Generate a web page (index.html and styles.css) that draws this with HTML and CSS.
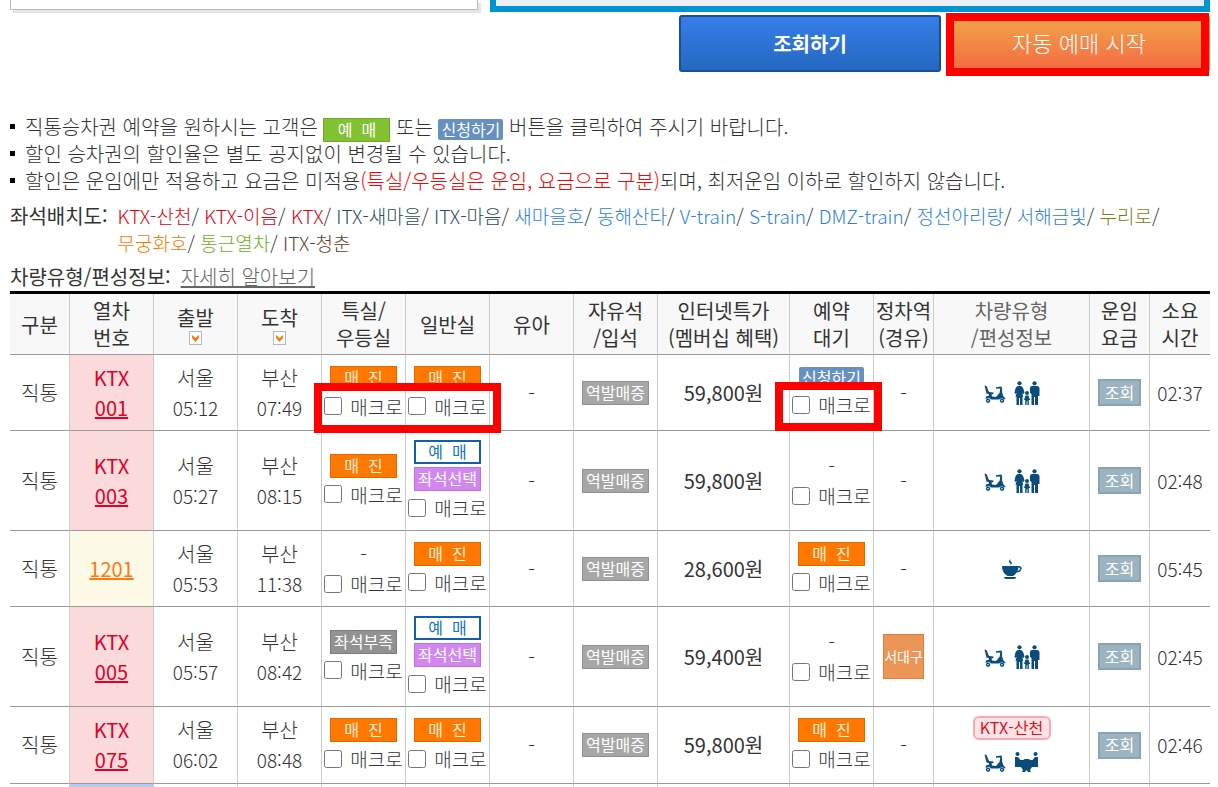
FILE: index.html
```html
<!DOCTYPE html>
<html lang="ko">
<head>
    <meta charset="utf-8">
    <title>승차권 예매</title>
    <link rel="stylesheet" href="styles.css">
</head>
<body>
    <svg class="defs" aria-hidden="true">
        <symbol id="scooter" viewBox="0 0 22 24">
            <path d="M0.500 4.500 L2.500 5 L5 11 L9.500 11.500 L9.500 13 L7.500 13.500 L8 15.500 L12 16 L15.500 12 L16.300 7.500 L12 7.800 L12 6.300 L17 5.500 L18 6.500 L18.200 12 L19.500 15.500 L21.500 17.500 L21 18.500 L18 17 L15 18.500 L7 18.500 L5 16.800 L1.500 18 L2 15.500 L5 14.500 L5 13.300 L2.500 12.500 Z"/>
            <path d="M4 17.500 a2.200 2.200 0 1 0 0.100 0 Z M4 19 a0.700 0.700 0 1 1 -0.100 0 Z" fill-rule="evenodd"/>
            <path d="M18 17.500 a2.200 2.200 0 1 0 0.100 0 Z M18 19 a0.700 0.700 0 1 1 -0.100 0 Z" fill-rule="evenodd"/>
        </symbol>
        <symbol id="family" viewBox="0 0 26 24">
            <circle cx="5.500" cy="2.300" r="2.100"/>
            <circle cx="20.500" cy="2.300" r="2.100"/>
            <circle cx="13" cy="12" r="2"/>
            <path d="M4 5 H7 Q9.500 6 10.500 12 L9.500 13 L8.500 12 L9 16 H8.500 V24 H6 V17 H5 V24 H2.500 V16 H1.500 L2.500 12 L1.500 13 L0.500 12 Q1 6 4 5 Z"/>
            <path d="M18 5 H23 Q25.500 5 25.500 8 V15 H24 V24 H21 V16 H20 V24 H17.500 V13 L16 12 V7 Q16 5 18 5 Z"/>
            <path d="M11.500 14.500 H14.500 L16 19 H14.800 V24 H13.400 V20 H12.600 V24 H11.200 V19 H10 Z"/>
        </symbol>
        <symbol id="meeting" viewBox="0 0 26 24">
            <circle cx="3.500" cy="4" r="2"/>
            <circle cx="21.500" cy="4" r="2"/>
            <path d="M1 7 H4 L6.500 10 H9 L11 9 H14.500 L16.500 10 H18.500 L21 7 H24 V17 H18 L16 20 L17 22 H14 L13 20.500 H12 L11 22 H8 L9 20 L7 17 H1 Z"/>
        </symbol>
        <symbol id="cup" viewBox="0 0 20 22">
            <path d="M8.500 1 Q5.500 3.500 8 5 Q8.500 6.500 8.500 7 Q11 5 9 3.800 Q7.800 3 8.500 1 Z"/>
            <path d="M0 8 H16.500 Q20 8 19.500 11 Q18.500 14.500 14.500 14.500 Q13 17 11 18 H5.500 Q0 15 0 8 Z M16.300 9.500 Q16.300 11.500 15.500 13 Q17.800 12.500 18 10.700 Q18 9.500 16.300 9.500 Z" fill-rule="evenodd"/>
            <path d="M2 19 H14 Q14 21 12 21 H4 Q2 21 2 19 Z"/>
        </symbol>
    </svg>

    <div class="options">
        <div class="box-left"></div>
        <div class="box-right"></div>
    </div>

    <div class="actions">
        <button type="button" class="btn-search">조회하기</button>
        <div class="marked">
            <button type="button" class="btn-auto">자동 예매 시작</button>
            <span class="mark mark-button"></span>
        </div>
    </div>

    <ul class="notice">
        <li>직통승차권 예약을 원하시는 고객은 <span class="badge green">예 &nbsp;매</span> 또는 <span class="badge apply">신청하기</span> 버튼을 클릭하여 주시기 바랍니다.</li>
        <li>할인 승차권의 할인율은 별도 공지없이 변경될 수 있습니다.</li>
        <li>할인은 운임에만 적용하고 요금은 미적용<em>(특실/우등실은 운임, 요금으로 구분)</em>되며, 최저운임 이하로 할인하지 않습니다.</li>
    </ul>

    <dl class="seatmap">
        <dt>좌석배치도:</dt>
        <dd>
            <a href="#" class="ktx">KTX-산천</a>/
            <a href="#" class="ktx">KTX-이음</a>/
            <a href="#" class="ktx">KTX</a>/
            <a href="#" class="itx">ITX-새마을</a>/
            <a href="#" class="itx">ITX-마음</a>/
            <a href="#" class="tour">새마을호</a>/
            <a href="#" class="tour">동해산타</a>/
            <a href="#" class="tour">V-train</a>/
            <a href="#" class="tour">S-train</a>/
            <a href="#" class="tour">DMZ-train</a>/
            <a href="#" class="tour">정선아리랑</a>/
            <a href="#" class="tour">서해금빛</a>/
            <a href="#" class="nuriro">누리로</a>/<br>
            <a href="#" class="mugung">무궁화호</a>/
            <a href="#" class="commute">통근열차</a>/
            <a href="#" class="youth">ITX-청춘</a>
        </dd>
    </dl>
    <dl class="seatmap formation">
        <dt>차량유형/편성정보:</dt>
        <dd><a href="#" class="more">자세히 알아보기</a></dd>
    </dl>

    <table class="trains">
        <colgroup>
            <col class="w5"><col class="w7"><col class="w7"><col class="w7"><col class="w7"><col class="w7"><col class="w7">
            <col class="w7"><col class="w11"><col class="w7"><col class="w5"><col class="w13"><col class="w5"><col class="w5">
        </colgroup>
        <thead>
            <tr>
                <th>구분</th>
                <th>열차<br>번호</th>
                <th>출발<button type="button" class="sort" aria-label="출발 정렬"><svg viewBox="0 0 11 12"><path d="M2 3 L5.500 6 L9 3 V6 L5.500 10 L2 6 Z"/></svg></button></th>
                <th>도착<button type="button" class="sort" aria-label="도착 정렬"><svg viewBox="0 0 11 12"><path d="M2 3 L5.500 6 L9 3 V6 L5.500 10 L2 6 Z"/></svg></button></th>
                <th>특실/<br>우등실</th>
                <th>일반실</th>
                <th>유아</th>
                <th>자유석<br>/입석</th>
                <th>인터넷특가<br>(멤버십 혜택)</th>
                <th>예약<br>대기</th>
                <th>정차역<br>(경유)</th>
                <th><a href="#">차량유형<br>/편성정보</a></th>
                <th>운임<br>요금</th>
                <th>소요<br>시간</th>
            </tr>
        </thead>
        <tbody>
            <tr>
                <td>직통</td>
                <td class="no-ktx">KTX<br><a href="#">001</a></td>
                <td>서울<br><span class="time">05:12</span></td>
                <td>부산<br><span class="time">07:49</span></td>
                <td class="marked">
                    <div class="seat"><span class="badge soldout">매 &nbsp;진</span><label><input type="checkbox">매크로</label></div>
                    <span class="mark mark-seats"></span>
                </td>
                <td><div class="seat"><span class="badge soldout">매 &nbsp;진</span><label><input type="checkbox">매크로</label></div></td>
                <td>-</td>
                <td><span class="badge departed">역발매중</span></td>
                <td class="price">59,800원</td>
                <td class="marked">
                    <div class="seat"><button type="button" class="badge apply">신청하기</button><label><input type="checkbox">매크로</label></div>
                    <span class="mark mark-wait"></span>
                </td>
                <td>-</td>
                <td><div class="cars"><svg class="scooter"><use href="#scooter"/></svg><svg class="family"><use href="#family"/></svg></div></td>
                <td><button type="button" class="badge fare">조회</button></td>
                <td class="time">02:37</td>
            </tr>
            <tr>
                <td>직통</td>
                <td class="no-ktx">KTX<br><a href="#">003</a></td>
                <td>서울<br><span class="time">05:27</span></td>
                <td>부산<br><span class="time">08:15</span></td>
                <td><div class="seat"><span class="badge soldout">매 &nbsp;진</span><label><input type="checkbox">매크로</label></div></td>
                <td><div class="seat"><button type="button" class="badge reserve">예 &nbsp;매</button><button type="button" class="badge choose">좌석선택</button><label><input type="checkbox">매크로</label></div></td>
                <td>-</td>
                <td><span class="badge departed">역발매중</span></td>
                <td class="price">59,800원</td>
                <td><div class="seat"><span class="none">-</span><label><input type="checkbox">매크로</label></div></td>
                <td>-</td>
                <td><div class="cars"><svg class="scooter"><use href="#scooter"/></svg><svg class="family"><use href="#family"/></svg></div></td>
                <td><button type="button" class="badge fare">조회</button></td>
                <td class="time">02:48</td>
            </tr>
            <tr>
                <td>직통</td>
                <td class="no-mugung"><a href="#">1201</a></td>
                <td>서울<br><span class="time">05:53</span></td>
                <td>부산<br><span class="time">11:38</span></td>
                <td><div class="seat"><span class="none">-</span><label><input type="checkbox">매크로</label></div></td>
                <td><div class="seat"><span class="badge soldout">매 &nbsp;진</span><label><input type="checkbox">매크로</label></div></td>
                <td>-</td>
                <td><span class="badge departed">역발매중</span></td>
                <td class="price">28,600원</td>
                <td><div class="seat"><span class="badge soldout">매 &nbsp;진</span><label><input type="checkbox">매크로</label></div></td>
                <td>-</td>
                <td><div class="cars"><svg class="cup"><use href="#cup"/></svg></div></td>
                <td><button type="button" class="badge fare">조회</button></td>
                <td class="time">05:45</td>
            </tr>
            <tr>
                <td>직통</td>
                <td class="no-ktx">KTX<br><a href="#">005</a></td>
                <td>서울<br><span class="time">05:57</span></td>
                <td>부산<br><span class="time">08:42</span></td>
                <td><div class="seat"><span class="badge short">좌석부족</span><label><input type="checkbox">매크로</label></div></td>
                <td><div class="seat"><button type="button" class="badge reserve">예 &nbsp;매</button><button type="button" class="badge choose">좌석선택</button><label><input type="checkbox">매크로</label></div></td>
                <td>-</td>
                <td><span class="badge departed">역발매중</span></td>
                <td class="price">59,400원</td>
                <td><div class="seat"><span class="none">-</span><label><input type="checkbox">매크로</label></div></td>
                <td><span class="badge via">서대구</span></td>
                <td><div class="cars"><svg class="scooter"><use href="#scooter"/></svg><svg class="family"><use href="#family"/></svg></div></td>
                <td><button type="button" class="badge fare">조회</button></td>
                <td class="time">02:45</td>
            </tr>
            <tr>
                <td>직통</td>
                <td class="no-ktx">KTX<br><a href="#">075</a></td>
                <td>서울<br><span class="time">06:02</span></td>
                <td>부산<br><span class="time">08:48</span></td>
                <td><div class="seat"><span class="badge soldout">매 &nbsp;진</span><label><input type="checkbox">매크로</label></div></td>
                <td><div class="seat"><span class="badge soldout">매 &nbsp;진</span><label><input type="checkbox">매크로</label></div></td>
                <td>-</td>
                <td><span class="badge departed">역발매중</span></td>
                <td class="price">59,800원</td>
                <td><div class="seat"><span class="badge soldout">매 &nbsp;진</span><label><input type="checkbox">매크로</label></div></td>
                <td>-</td>
                <td class="with-type"><span class="badge type">KTX-산천</span><div class="cars"><svg class="scooter"><use href="#scooter"/></svg><svg class="family"><use href="#meeting"/></svg></div></td>
                <td><button type="button" class="badge fare">조회</button></td>
                <td class="time">02:46</td>
            </tr>
            <tr class="next">
                <td></td><td class="no-itx"></td><td></td><td></td><td></td><td></td><td></td>
                <td></td><td></td><td></td><td></td><td></td><td></td><td></td>
            </tr>
        </tbody>
    </table>
</body>
</html>
```
FILE: styles.css
```css
* {
    box-sizing: border-box;
}

body {
    margin: 0;
    padding: 0 8px 0 10px;
    background: #fff;
    color: #333;
    font-family: "Noto Sans CJK KR", sans-serif;
    font-size: 20px;
    font-weight: 300;
    line-height: 27px;
}

button {
    font-family: inherit;
    padding: 0;
    cursor: pointer;
}

a {
    color: inherit;
}

.defs {
    display: none;
}

/* search options, bottom edge */
.options {
    display: flex;
    justify-content: space-between;
    align-items: flex-start;
}

.box-left {
    width: 39%;
    height: 10px;
    border: 1px solid #bbb;
    border-top: none;
    box-shadow: 3px 3px 0 #e5e5e5;
}

.box-right {
    width: 60%;
    height: 12px;
    border: 6px solid #0095d0;
    border-top: none;
    background: #ebeff3;
}

.actions {
    display: flex;
    justify-content: flex-end;
    gap: 7px;
    margin-top: 3px;
}

.marked {
    position: relative;
}

.mark {
    position: absolute;
    z-index: 1;
    border: 8px solid #f00;
    pointer-events: none;
}

.mark-button {
    top: -2px;
    right: 1px;
    bottom: -4px;
    left: -2px;
}

.mark-seats {
    top: 28px;
    left: -8px;
    width: calc(200% + 21px);
    height: 50px;
}

.mark-wait {
    top: 27px;
    left: -15px;
    right: -9px;
    height: 49px;
}

.btn-search,
.btn-auto {
    display: block;
    width: 262px;
    height: 57px;
    padding-bottom: 3px;
    color: #fff;
}

.btn-search {
    padding-bottom: 0;
    border: 2px solid #1a4f93;
    border-radius: 3px;
    background: linear-gradient(#367ee9, #2369c0);
    font-size: 20px;
    font-weight: bold;
}

.btn-auto {
    border: 1px solid #f08030;
    border-radius: 3px;
    background: linear-gradient(#f0a64a, #f56a42);
    font-size: 22px;
    font-weight: 300;
}

.notice {
    margin: 41px 0 0;
    padding: 0;
    list-style: none;
}

.notice li {
    padding-left: 15px;
    background: linear-gradient(#000, #000) 0 11px / 5px 5px no-repeat;
}

.notice em {
    color: #f00;
    font-style: normal;
}

.notice .badge {
    display: inline-flex;
    margin: -4px 0;
    vertical-align: middle;
}

.seatmap {
    display: flex;
    gap: 10px;
    margin: 8px 0 0;
}

.seatmap dt {
    flex: none;
    font-weight: 400;
}

.seatmap dd {
    margin: 0;
    font-size: 19px;
}

.seatmap a {
    text-decoration: none;
}

.formation dd {
    font-size: 20px;
}

.seatmap .more {
    color: #666;
    text-decoration: underline;
}

.formation {
    margin: 7px 0 1px;
}

.ktx { color: #d7000f; }
.itx { color: #284a68; }
.tour { color: #2e82d6; }
.nuriro { color: #7f7a10; }
.mugung { color: #ff7800; }
.commute { color: #6ab01e; }
.youth { color: #6e3a28; }

/* train list */
.trains {
    width: 100%;
    table-layout: fixed;
    border-collapse: separate;
    border-spacing: 0;
    border-top: 3px solid #000;
    text-align: center;
}

.w5 { width: 5%; }
.w7 { width: 7%; }
.w11 { width: 11%; }
.w13 { width: 13%; }

th,
td {
    padding: 0;
    border-right: 1px solid #ccc;
    border-bottom: 1px solid #999;
    vertical-align: middle;
    white-space: nowrap;
}

th:last-child,
td:last-child {
    border-right: none;
}

th {
    height: 61px;
    background: #f8f8f8;
    font-weight: 400;
}

th a {
    color: #666;
    text-decoration: none;
}

td {
    height: 76px;
    line-height: 30px;
}

.sort {
    display: block;
    width: 13px;
    height: 14px;
    margin: 0 auto;
    border: 1px solid #aabdcb;
    background: #fff;
}

.sort svg {
    display: block;
    width: 11px;
    height: 12px;
    fill: #ff7a00;
}

.time {
    font-size: 19px;
}

.price {
    font-weight: 400;
}

.no-ktx {
    background: #fbdadc;
    color: #e0002a;
    font-weight: 400;
}

.no-mugung {
    background: #fdf9e7;
    color: #ff7a10;
    font-weight: 400;
}

.no-itx {
    background: #b2cdf2;
}

.next td {
    height: 3px;
    border-bottom: none;
}

.seat {
    display: flex;
    flex-direction: column;
    align-items: center;
    gap: 3px;
    line-height: 27px;
}

.seat:has(.choose) {
    padding: 9px 0;
}

.seat label {
    display: flex;
    align-items: center;
    gap: 8px;
    font-size: 19px;
}

.seat input {
    width: 18px;
    height: 18px;
    margin: 0;
}

.badge {
    display: flex;
    align-items: center;
    justify-content: center;
    width: 67px;
    height: 24px;
    margin: 0 auto;
    padding-bottom: 2px;
    border: 1px solid;
    color: #fff;
    font-size: 16px;
    font-weight: 400;
    line-height: 20px;
}

.green {
    border-color: #72a82a;
    background: #82c131;
}

.apply {
    width: 65px;
    height: 21px;
    border: none;
    border-radius: 2px;
    background: #6690c0;
}

.soldout {
    border-color: #e06800;
    background: #ff7900;
    color: #ffefdc;
}

.departed {
    border-color: #909090;
    background: #a6a6a6;
}

.short {
    border-color: #7c7c7c;
    background: #929292;
}

.reserve {
    border: 2px solid #0f62a8;
    background: #fff;
    color: #1773bc;
}

.choose {
    border-color: #c070e0;
    background: #d287f0;
}

.fare {
    width: 43px;
    height: 27px;
    border: 2px solid #89a5b4;
    background: #9cb4c2;
}

.via {
    width: 41px;
    height: 45px;
    border-color: #e57e34;
    background: #eb9657;
    font-size: 14px;
}

.type {
    width: 78px;
    border: 2px solid #fca8ae;
    border-radius: 6px;
    background: #ffe4e6;
    color: #e0101c;
}

.with-type {
    padding: 9px 0;
    line-height: 24px;
}

.with-type .badge {
    margin-bottom: 10px;
}

.cars {
    display: flex;
    justify-content: center;
    gap: 8px;
    fill: #0a4d7c;
}

.scooter {
    width: 22px;
    height: 24px;
}

.family {
    width: 26px;
    height: 24px;
}

.cup {
    width: 20px;
    height: 22px;
}
```
